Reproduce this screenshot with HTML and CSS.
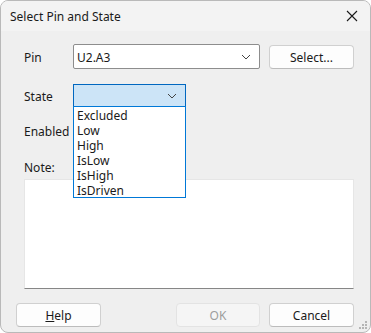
FILE: index.html
```html
<!DOCTYPE html>
<html lang="en">
<head>
    <meta charset="UTF-8">
    <title>Select Pin and State</title>
    <link rel="stylesheet" href="styles.css">
</head>
<body>
  <div class="window">

    <div class="titlebar">
      <span class="title">Select Pin and State</span>
      <svg class="close" width="12" height="12" viewBox="0 0 12 12">
        <path d="M1 1 L11 11 M11 1 L1 11" stroke="#1a1a1a" stroke-width="1.1" fill="none"/>
      </svg>
    </div>

    <div class="form">
      <div class="row row-pin">
        <span class="label">Pin</span>
        <div class="combo combo-pin">
          <span>U2.A3</span>
          <svg class="chevron" width="10" height="6" viewBox="0 0 10 6"><path d="M1 1 L5 5 L9 1" stroke="#444" stroke-width="1" fill="none"/></svg>
        </div>
        <button class="btn btn-select">Select...</button>
      </div>

      <div class="row row-state">
        <span class="label">State</span>
        <div class="combo combo-state">
          <span></span>
          <svg class="chevron" width="10" height="6" viewBox="0 0 10 6"><path d="M1 1 L5 5 L9 1" stroke="#444" stroke-width="1" fill="none"/></svg>
          <ul class="dropdown-list">
            <li>Excluded</li>
            <li>Low</li>
            <li>High</li>
            <li>IsLow</li>
            <li>IsHigh</li>
            <li>IsDriven</li>
          </ul>
        </div>
      </div>

      <div class="row row-enabled">
        <span class="label">Enabled</span>
      </div>

      <div class="row row-note">
        <span class="label">Note:</span>
      </div>

      <div class="note-box"></div>
    </div>

    <div class="button-row">
      <button class="btn"><u>H</u>elp</button>
      <div class="spacer"></div>
      <button class="btn btn-disabled">OK</button>
      <button class="btn btn-cancel">Cancel</button>
    </div>

    <svg class="grip" width="10" height="10" viewBox="0 0 10 10">
      <rect x="7" y="1" width="2" height="2" fill="#b5b5b5"/>
      <rect x="4" y="4" width="2" height="2" fill="#b5b5b5"/>
      <rect x="7" y="4" width="2" height="2" fill="#b5b5b5"/>
      <rect x="1" y="7" width="2" height="2" fill="#b5b5b5"/>
      <rect x="4" y="7" width="2" height="2" fill="#b5b5b5"/>
      <rect x="7" y="7" width="2" height="2" fill="#b5b5b5"/>
    </svg>
  </div>
</body>
</html>
```

FILE: styles.css
```css
html, body {
    margin: 0px;
    background-color: #ffffff;
}

body {
    font-family: "Noto Sans", Arial, sans-serif;
    font-size: 12px;
    color: #1a1a1a;
}

.window {
    position: relative;
    width: 371px;
    height: 333px;
    box-sizing: border-box;
    border: 1px solid #b9b9b9;
    border-radius: 8px;
    background-color: #efefef;
    overflow: hidden;
}

.titlebar {
    height: 30px;
    display: flex;
    align-items: center;
    justify-content: space-between;
    padding: 0px 9px 0px 9px;
    background-color: #f3f3f3;
}

.title {
    font-size: 12px;
}

.close {
    margin-right: 3px;
}

.form {
    padding: 0px 16px 0px 23px;
}

.row {
    display: flex;
    align-items: center;
}

.label {
    width: 49px;
    flex-shrink: 0;
    padding-top: 1px;
}

.row-pin {
    margin-top: 13px;
    height: 25px;
}

.row-state {
    margin-top: 15px;
    height: 23px;
}

.row-enabled {
    margin-top: 15px;
    height: 18px;
}

.row-note {
    margin-top: 18px;
    height: 18px;
}

.combo {
    position: relative;
    box-sizing: border-box;
    display: flex;
    align-items: center;
    justify-content: space-between;
    padding: 1px 8px 0px 3px;
}

.combo-pin {
    width: 187px;
    height: 25px;
    background-color: #ffffff;
    border: 1px solid #8d8d8d;
    border-radius: 2px;
}

.combo-state {
    width: 113px;
    height: 23px;
    background-color: #cce4f7;
    border: 1px solid #0067c0;
}

.dropdown-list {
    position: absolute;
    left: -1px;
    top: 21px;
    width: 113px;
    height: 92px;
    box-sizing: border-box;
    margin: 0px;
    padding: 1px 0px 0px 0px;
    list-style: none;
    background-color: #ffffff;
    border: 1px solid #0078d7;
    z-index: 2;
}

.dropdown-list li {
    height: 15px;
    line-height: 15px;
    padding-left: 3px;
}

.btn {
    font-family: "Noto Sans", Arial, sans-serif;
    font-size: 12px;
    color: #1a1a1a;
    box-sizing: border-box;
    width: 85px;
    height: 24px;
    padding: 1px 0px 0px 0px;
    background-color: #fdfdfd;
    border: 1px solid #d0d0d0;
    border-bottom-color: #bcbcbc;
    border-radius: 4px;
}

.btn-select {
    margin-left: 9px;
}

.btn-disabled {
    width: 84px;
    color: #9d9d9d;
    background-color: #f5f5f5;
    border-color: #e3e3e3;
}

.btn-cancel {
    margin-left: 9px;
}

.note-box {
    margin-top: 3px;
    height: 110px;
    box-sizing: border-box;
    background-color: #ffffff;
    border: 1px solid #e6e6e6;
    border-bottom: 1px solid #868686;
}

.button-row {
    display: flex;
    margin-top: 14px;
    padding: 0px 16px 0px 15px;
}

.spacer {
    flex: 1;
}

.grip {
    position: absolute;
    right: 2px;
    bottom: 2px;
}
```
